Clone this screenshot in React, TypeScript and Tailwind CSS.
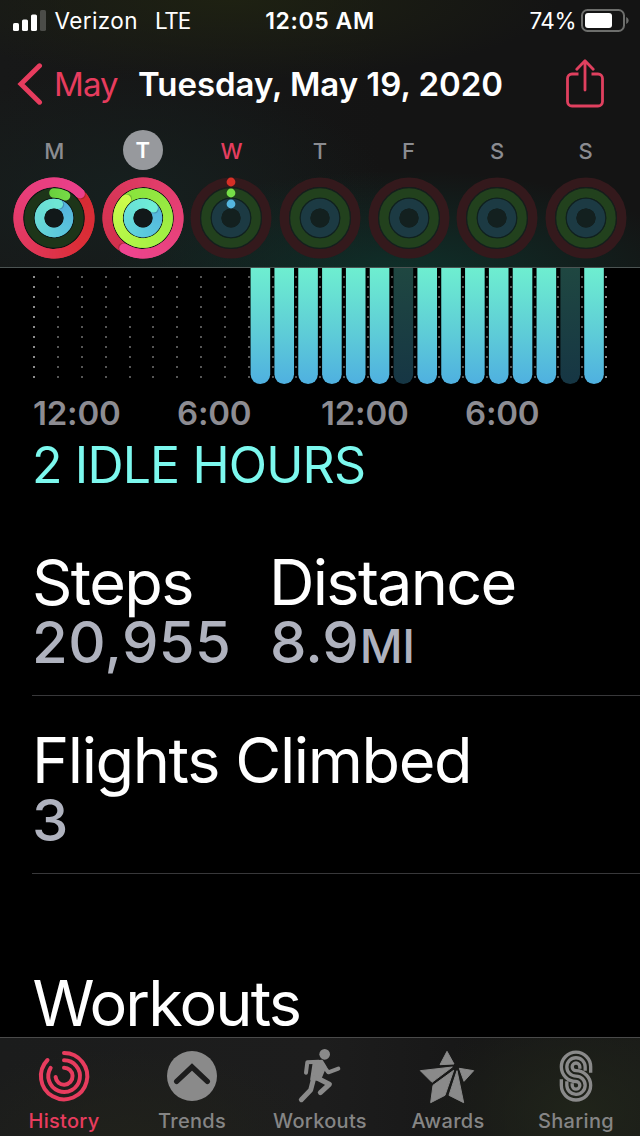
import React from "react";

type RGB = [number, number, number];

function mix(stops: RGB[], t: number): string {
  const p = Math.min(0.9999, Math.max(0, t)) * (stops.length - 1);
  const i = Math.floor(p);
  const f = p - i;
  const c = stops[i].map((v, k) => Math.round(v + (stops[i + 1][k] - v) * f));
  return `rgb(${c[0]},${c[1]},${c[2]})`;
}

function polar(r: number, deg: number): [number, number] {
  const a = (deg * Math.PI) / 180;
  return [41 + r * Math.sin(a), 41 - r * Math.cos(a)];
}

interface RingProps {
  r: number;
  from: number;
  to: number;
  stops: RGB[];
}

function Ring({ r, from, to, stops }: RingProps) {
  const n = 72;
  const w = 9.6;
  const step = (to - from) / n;
  const [hx, hy] = polar(r, to);
  const [shx, shy] = polar(r, to + 90 / r);
  return (
    <g fill="none" strokeWidth={w}>
      {Array.from({ length: n }, (_, i) => {
        const [x1, y1] = polar(r, from + i * step);
        const [x2, y2] = polar(r, from + (i + 1) * step + (i < n - 1 ? step : 0));
        return <path key={i} d={`M${x1} ${y1}A${r} ${r} 0 0 1 ${x2} ${y2}`} stroke={mix(stops, i / (n - 1))} />;
      })}
      <circle cx={shx} cy={shy} r={w / 2 - 0.3} fill="#000" fillOpacity={0.18} stroke="none" />
      <circle cx={hx} cy={hy} r={w / 2} fill={mix(stops, 1)} stroke="none" />
    </g>
  );
}

const RADII = [35.7, 25, 14.4];

function Rings({ kind }: { kind: string }) {
  if (kind === "mon" || kind === "tue") {
    const mon = kind === "mon";
    return (
      <svg viewBox="0 0 82 82" className="h-[82px] w-[82px]">
        <circle cx="41" cy="41" r="32" fill="#0c1414" />
        {mon ? (
          <>
            <Ring r={RADII[0]} from={47} to={407} stops={[[214, 44, 52], [220, 46, 56], [224, 56, 92], [232, 62, 122], [234, 64, 140]]} />
            <circle cx="41" cy="41" r={RADII[1]} fill="none" stroke="#1d3519" strokeWidth="9.6" />
            <defs>
              <linearGradient id="exercise" x1="36" y1="0" x2="58" y2="0" gradientUnits="userSpaceOnUse">
                <stop offset="0" stopColor="#68cf3c" />
                <stop offset="1" stopColor="#78dc48" />
              </linearGradient>
            </defs>
            <path d="M41 16A25 25 0 0 1 52.500 18.800" fill="none" stroke="url(#exercise)" strokeWidth="9.6" strokeLinecap="round" />
            <Ring r={RADII[2]} from={17} to={377} stops={[[84, 176, 220], [90, 196, 220], [104, 216, 214], [110, 230, 212]]} />
          </>
        ) : (
          <>
            <Ring r={RADII[0]} from={212} to={572} stops={[[210, 48, 76], [216, 54, 88], [226, 62, 108], [232, 66, 124], [238, 68, 144]]} />
            <Ring r={RADII[1]} from={-42} to={318} stops={[[136, 228, 60], [150, 232, 66], [164, 240, 68], [180, 246, 72], [204, 252, 76]]} />
            <Ring r={RADII[2]} from={45} to={405} stops={[[84, 180, 220], [90, 200, 222], [104, 222, 216], [112, 238, 214]]} />
          </>
        )}
        <circle cx="41" cy="41" r="9.6" fill="#111819" />
      </svg>
    );
  }
  return (
    <svg viewBox="0 0 82 82" className="h-[82px] w-[82px]" fill="none" strokeWidth="9.6">
      <circle cx="41" cy="41" r={RADII[0]} stroke="#34191c" />
      <circle cx="41" cy="41" r="30.4" stroke="#161f1d" strokeWidth="1.2" />
      <circle cx="41" cy="41" r={RADII[1]} stroke="#22411d" />
      <circle cx="41" cy="41" r="19.7" stroke="#10211f" strokeWidth="1.3" />
      <circle cx="41" cy="41" r={RADII[2]} stroke="#1c3a43" />
      <circle cx="41" cy="41" r="9.6" fill="#13201f" stroke="none" />
      {kind === "wed" && (
        <g stroke="none">
          <circle cx="41" cy="5" r="4.4" fill="#d63026" />
          <circle cx="41" cy="16" r="4.4" fill="#76df48" />
          <circle cx="41" cy="27" r="4.4" fill="#55b6e0" />
        </g>
      )}
    </svg>
  );
}

const DAYS = [
  { d: "M", kind: "mon" },
  { d: "T", kind: "tue" },
  { d: "W", kind: "wed" },
  { d: "T", kind: "none" },
  { d: "F", kind: "none" },
  { d: "S", kind: "none" },
  { d: "S", kind: "none" },
];

function StatusBar() {
  return (
    <div className="grid h-[41px] grid-cols-[1fr_auto_1fr] items-center leading-none whitespace-nowrap text-white">
      <div className="flex items-center pl-[13px]">
        <svg viewBox="0 0 33 21" className="h-[21px] w-[33px]">
          <rect x="0" y="13" width="6" height="8" rx="1.6" fill="#fff" />
          <rect x="9" y="9.5" width="6" height="11.5" rx="1.6" fill="#fff" />
          <rect x="18" y="4.5" width="6" height="16.5" rx="1.6" fill="#fff" />
          <rect x="27" y="0" width="6" height="21" rx="1.6" fill="#4b4c48" />
        </svg>
        <span className="mt-px ml-[8.5px] text-[22.5px] tracking-[0.4px]">Verizon</span>
        <span className="mt-px ml-[17px] text-[22.5px] tracking-[-1.2px]">LTE</span>
      </div>
      <span className="mt-px text-[23px] font-semibold tracking-[0.6px]">12:05 AM</span>
      <div className="flex items-center justify-end pr-[11px]">
        <span className="mt-px mr-[5px] text-[22.5px] tracking-[-0.5px]">74%</span>
        <svg viewBox="0 0 48 23" className="h-[23px] w-[48px]">
          <rect x="1" y="1" width="42" height="21" rx="5.5" fill="none" stroke="#6d6e6c" strokeWidth="2" />
          <rect x="4" y="4" width="27" height="15" rx="3" fill="#fff" />
          <path d="M45.200 8v7c1.600-.8 2.400-2 2.400-3.500S46.800 8.800 45.200 8z" fill="#6d6e6c" />
        </svg>
      </div>
    </div>
  );
}

function NavBar() {
  return (
    <div className="flex h-[86px] items-center pl-[17px] leading-none whitespace-nowrap">
      <svg viewBox="0 0 26 44" className="h-[44px] w-[26px]">
        <path d="M22.500 3.800L4 22l18.500 18.200" fill="none" stroke="#e73c5e" strokeWidth="5" strokeLinecap="round" strokeLinejoin="miter" />
      </svg>
      <span className="ml-[11px] w-[84px] text-[33px] tracking-[-0.9px] text-[#e73c5e]">May</span>
      <span className="text-[33px] font-semibold tracking-[-0.05px] text-white">Tuesday, May 19, 2020</span>
      <svg viewBox="0 0 40 50" className="mr-[35px] ml-auto h-[50px] w-[40px]" fill="none" stroke="#e0405f" strokeWidth="2.800" strokeLinecap="round" strokeLinejoin="round">
        <path d="M13.500 15H7a4.500 4.500 0 0 0-4.500 4.500v23A4.500 4.500 0 0 0 7 47h26a4.500 4.500 0 0 0 4.500-4.500v-23a4.500 4.500 0 0 0-4.500-4.500h-6.500" strokeLinecap="butt" />
        <path d="M20 31V2M11.800 10.200L20 1.800l8.200 8.400" />
      </svg>
    </div>
  );
}

function WeekStrip() {
  return (
    <div className="grid grid-cols-7 px-[10px]">
      {DAYS.map((day, i) => (
        <div key={i} className="flex flex-col items-center">
          <div className="flex h-[46px] items-center justify-center">
            <span
              className={
                i === 1
                  ? "flex h-10 w-10 items-center justify-center rounded-full bg-[#97999d] text-[22px] leading-none font-semibold text-white"
                  : i === 2
                    ? "pt-px text-[22px] leading-none font-medium text-[#e43e60]"
                    : "pt-px text-[22px] leading-none font-medium text-[#8b8c91]"
              }
            >
              {day.d}
            </span>
          </div>
          <div className="mt-[4px] h-[82px]">
            <Rings kind={day.kind} />
          </div>
        </div>
      ))}
    </div>
  );
}

const PITCH = 23.83;
const IDLE = [6, 13];

function StandChart() {
  return (
    <svg viewBox="0 268 640 116" className="block h-[116px] w-[640px]">
      <defs>
        <linearGradient id="stand" x1="0" y1="268" x2="0" y2="384" gradientUnits="userSpaceOnUse">
          <stop offset="0" stopColor="#6eeed0" />
          <stop offset="0.5" stopColor="#60d0d6" />
          <stop offset="1" stopColor="#4fb0e0" />
        </linearGradient>
        <linearGradient id="idle" x1="0" y1="268" x2="0" y2="384" gradientUnits="userSpaceOnUse">
          <stop offset="0" stopColor="#1f4741" />
          <stop offset="1" stopColor="#163644" />
        </linearGradient>
      </defs>
      {Array.from({ length: 25 }, (_, c) =>
        Array.from({ length: 11 }, (_, r) => (
          <rect key={`${c}-${r}`} x={Math.round(33.2 + c * PITCH)} y={276 + r * 10} width="2" height="2" fill={c === 0 || c === 24 ? "#8e8e8e" : "#565656"} />
        )),
      )}
      {Array.from({ length: 15 }, (_, i) => (
        <rect key={i} x={250.6 + i * PITCH} y={240} width="19.600" height="144" rx="9.800" fill={IDLE.includes(i) ? "url(#idle)" : "url(#stand)"} />
      ))}
    </svg>
  );
}

function Content() {
  return (
    <main className="min-h-0 flex-1 overflow-hidden bg-black text-white">
      <StandChart />
      <div className="flex h-[58px] items-center pl-[33px] text-[33px] leading-none font-semibold tracking-[-0.2px] text-[#8d8c92]">
        {["12:00", "6:00", "12:00", "6:00"].map((t, i) => (
          <span key={i} className="w-[144px]">{t}</span>
        ))}
      </div>
      <div className="pl-[32px] text-[50px] leading-[46px] tracking-[-0.85px] text-[#7cf8ee]">2 IDLE HOURS</div>
      <section className="ml-8 flex border-b border-[#38383a] pt-[64px] pb-[23px]">
        <div className="w-[238px]">
          <h2 className="text-[63px] leading-[60px] tracking-[-1.6px]">Steps</h2>
          <p className="text-[58px] leading-[60px] font-medium tracking-[0.4px] text-[#afb2be]">20,955</p>
        </div>
        <div>
          <h2 className="-ml-px text-[63px] leading-[60px] tracking-[-1.7px]">Distance</h2>
          <p className="flex h-[60px] items-baseline text-[58px] leading-[60px] font-medium text-[#afb2be]">
            8.9<span className="ml-px text-[47px] leading-none tracking-[-0.5px]">MI</span>
          </p>
        </div>
      </section>
      <section className="ml-8 border-b border-[#38383a] pt-[34px] pb-[23px]">
        <h2 className="text-[63px] leading-[60px] tracking-[-1.4px]">Flights Climbed</h2>
        <p className="text-[58px] leading-[60px] font-medium text-[#afb2be]">3</p>
      </section>
      <h2 className="mt-[99px] ml-[32.5px] text-[63px] leading-[60px] tracking-[-1.9px]">Workouts</h2>
    </main>
  );
}

function HistoryIcon() {
  return (
    <svg viewBox="102 51 180 180" className="h-[60px] w-[60px]" fill="none" stroke="#e73c5e" strokeWidth="12" strokeLinecap="round">
      <path d="M192 69A69.500 69.500 0 1 1 142.500 90" />
      <path d="M192 91A47.500 47.500 0 1 1 152 113.500" />
      <path d="M192 113A25.500 25.500 0 1 1 166.800 141" />
    </svg>
  );
}

function TrendsIcon() {
  return (
    <svg viewBox="486 51 180 180" className="h-[60px] w-[60px]">
      <circle cx="576" cy="138" r="75" fill="#8a8a8a" />
      <path d="M530 154L576 111L622 154" fill="none" stroke="#1d1d1d" strokeWidth="16" strokeLinecap="round" />
    </svg>
  );
}

function WorkoutsIcon() {
  return (
    <svg viewBox="120 51 180 180" className="h-[60px] w-[60px]" fill="none" stroke="#8a8a8a" strokeLinecap="round" strokeLinejoin="round">
      <circle cx="224" cy="73" r="16" fill="#8a8a8a" stroke="none" />
      <path d="M168 128L172 97L206 95" strokeWidth="12" />
      <path d="M214 99L235 127L265 116" strokeWidth="12" />
      <path d="M192 95L216 93L226 110L210 148L184 148Z" fill="#8a8a8a" strokeWidth="7" />
      <path d="M200 143L238 163L211 188" strokeWidth="15" />
      <path d="M191 145L182 180L154 209" strokeWidth="15" />
    </svg>
  );
}

function AwardsIcon() {
  return (
    <svg viewBox="504 51 180 180" className="h-[60px] w-[60px]" fill="#8a8a8a" stroke="#8a8a8a" strokeWidth="3" strokeLinejoin="round">
      <path d="M591 64L612 102L570 104Z" />
      <path d="M511 122L607 111L546 157Z" />
      <path d="M611 121L585 196L542 218L549 166Z" />
      <path d="M621 122L641 218L597 196Z" />
      <path d="M628 115L671 122L642 154Z" />
    </svg>
  );
}

function SharingIcon() {
  return (
    <svg viewBox="888 51 180 180" className="h-[60px] w-[60px]" fill="none" stroke="#8a8a8a" strokeWidth="10">
      <path d="M1022 128V110.500A44 44 0 1 0 978 154.500A11.500 11.500 0 1 1 966.500 166V160" />
      <path d="M1005.500 122V110.500A27.500 27.500 0 1 0 978 138.200A27.500 27.500 0 1 1 950.500 166V154" />
      <path d="M989.500 116V110.500A11.500 11.500 0 1 0 978 122A44 44 0 1 1 934 166V148" />
    </svg>
  );
}

const TABS = [
  { label: "History", icon: <HistoryIcon /> },
  { label: "Trends", icon: <TrendsIcon /> },
  { label: "Workouts", icon: <WorkoutsIcon /> },
  { label: "Awards", icon: <AwardsIcon /> },
  { label: "Sharing", icon: <SharingIcon /> },
];

function TabBar() {
  return (
    <nav className="grid h-[99px] shrink-0 grid-cols-5 border-t border-[#4a4a4a] bg-[radial-gradient(ellipse_160px_110px_at_580px_75px,#20241a,transparent),radial-gradient(ellipse_200px_90px_at_130px_100px,#20211b,transparent),linear-gradient(90deg,#1b1c1c,#1d1d1d_50%,#171717_75%,#191a18)]">
      {TABS.map((t, i) => (
        <div key={t.label} className="flex flex-col items-center pt-[9px]">
          {t.icon}
          <span className={i === 0 ? "mt-[4px] text-[20px] leading-[21px] font-medium tracking-[0.3px] text-[#e73c5e]" : "mt-[4px] text-[20px] leading-[21px] font-medium tracking-[0.3px] text-[#858585]"}>{t.label}</span>
        </div>
      ))}
    </nav>
  );
}

export default function App() {
  return (
    <div className="flex h-[1136px] w-[640px] flex-col overflow-hidden bg-black font-['Inter','Liberation_Sans',sans-serif]">
      <header className="h-[268px] shrink-0 border-b border-[#4c5453] bg-[radial-gradient(ellipse_300px_110px_at_400px_280px,#0f312b,transparent),radial-gradient(ellipse_260px_130px_at_130px_200px,#16201f,transparent),radial-gradient(ellipse_330px_80px_at_230px_0px,#1e2112,transparent),linear-gradient(90deg,#171818,#141414_60%)]">
        <StatusBar />
        <NavBar />
        <WeekStrip />
      </header>
      <Content />
      <TabBar />
    </div>
  );
}
